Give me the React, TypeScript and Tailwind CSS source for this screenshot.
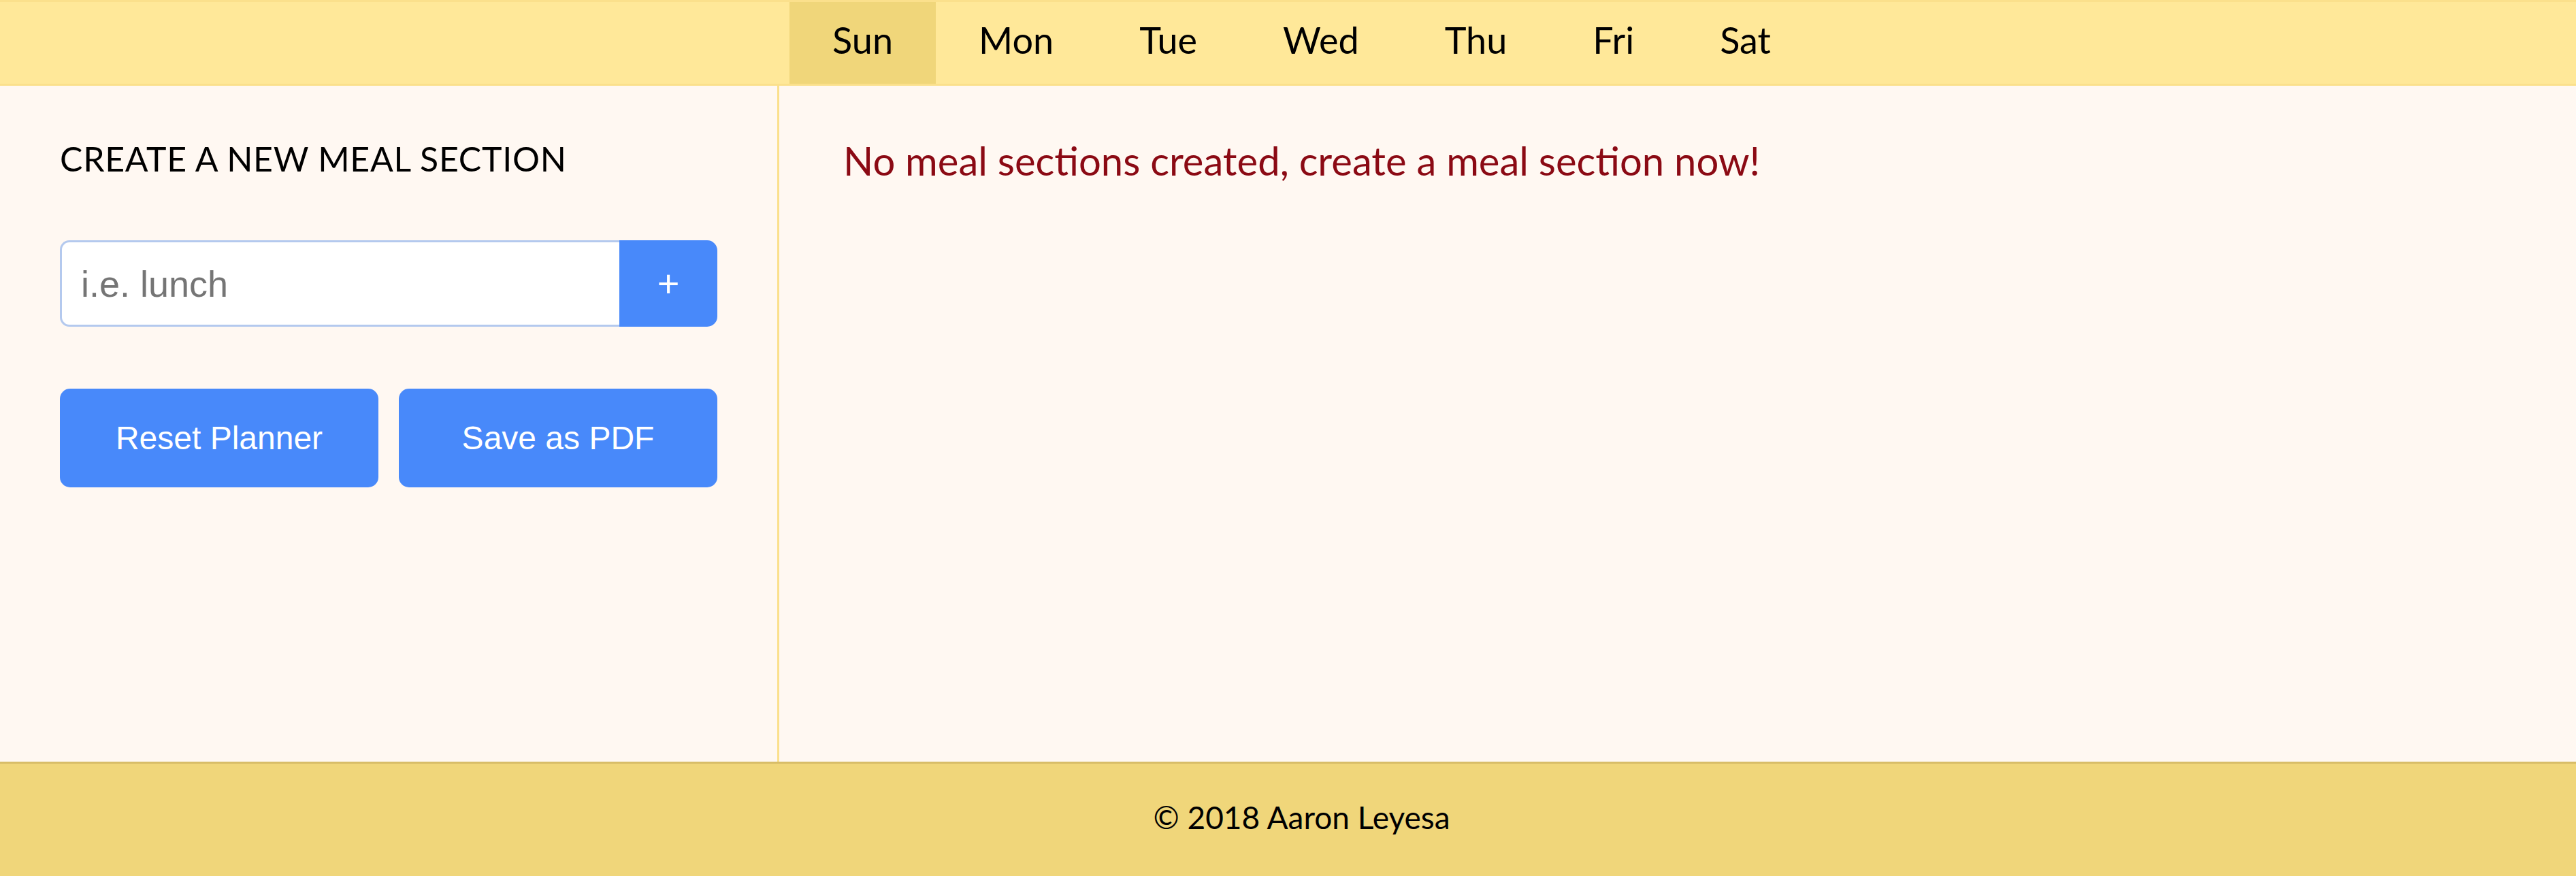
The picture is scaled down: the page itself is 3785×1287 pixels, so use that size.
const days = ["Sun", "Mon", "Tue", "Wed", "Thu", "Fri", "Sat"];

export default function App() {
  const active = "Sun";

  return (
    <div className="flex h-[1287px] flex-col bg-[#fff8f2] font-['Lato',sans-serif] text-black">
      <header className="h-[126px] border-y-[3px] border-[#fbe08c] bg-[#ffe899]">
        <ul className="flex h-full justify-center pl-[40px]">
          {days.map((d) => (
            <li
              key={d}
              className={
                "flex h-full items-center px-[63px] pb-[8px] text-[54px] leading-none " +
                (d === active ? "bg-[#f0d67a]" : "")
              }
            >
              {d}
            </li>
          ))}
        </ul>
      </header>

      <div className="flex h-[993px]">
        <aside className="w-[1145px] border-r-[3px] border-[#fbe08c] px-[88px] pt-[82px]">
          <h2 className="text-[50px] leading-none tracking-[0.75px]">CREATE A NEW MEAL SECTION</h2>

          <form className="mt-[95px] flex h-[127px]" onSubmit={(e) => e.preventDefault()}>
            <input
              type="text"
              placeholder="i.e. lunch"
              className="h-full min-w-0 flex-1 rounded-l-[14px] border-[3px] border-r-0 border-[#b4c9ee] bg-white pl-[28px] font-['Liberation_Sans',Arial,sans-serif] text-[54px] outline-none placeholder:text-[#757575]"
            />
            <button
              type="submit"
              className="h-full w-[144px] rounded-r-[15px] bg-[#4889fa] font-['Liberation_Sans',Arial,sans-serif] text-[56px] text-white"
            >
              +
            </button>
          </form>

          <div className="mt-[91px] flex gap-[30px]">
            <button className="h-[145px] flex-1 rounded-[15px] bg-[#4889fa] font-['Liberation_Sans',Arial,sans-serif] text-[48px] text-white">
              Reset Planner
            </button>
            <button className="h-[145px] flex-1 rounded-[15px] bg-[#4889fa] font-['Liberation_Sans',Arial,sans-serif] text-[48px] text-white">
              Save as PDF
            </button>
          </div>
        </aside>

        <main className="flex-1 pl-[94px] pt-[81px]">
          <p className="text-[58px] leading-none text-[#8b0a14]">
            No meal sections created, create a meal section now!
          </p>
        </main>
      </div>

      <footer className="flex h-[168px] items-center justify-center border-t-[3px] border-[#d8bd68] bg-[#f0d67a] pb-[8px] pl-[40px]">
        <p className="text-[46px] leading-none">© 2018 Aaron Leyesa</p>
      </footer>
    </div>
  );
}
